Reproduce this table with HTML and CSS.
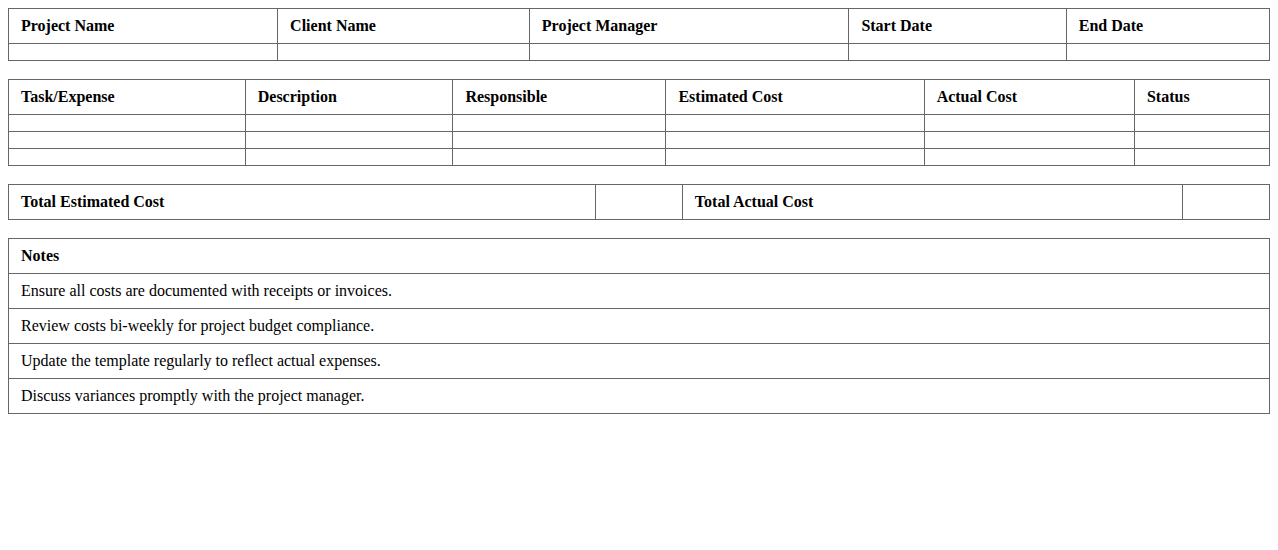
FILE: index.html
```html
<!DOCTYPE html>
<html lang="en">
<head>
<meta charset="utf-8">
<title>Project Cost Template</title>
<link rel="stylesheet" href="styles.css">
</head>
<body>
<table class="sheet">
  <tr><th>Project Name</th><th>Client Name</th><th>Project Manager</th><th>Start Date</th><th>End Date</th></tr>
  <tr><td></td><td></td><td></td><td></td><td></td></tr>
</table>
<table class="sheet">
  <tr><th>Task/Expense</th><th>Description</th><th>Responsible</th><th>Estimated Cost</th><th>Actual Cost</th><th>Status</th></tr>
  <tr><td></td><td></td><td></td><td></td><td></td><td></td></tr>
  <tr><td></td><td></td><td></td><td></td><td></td><td></td></tr>
  <tr><td></td><td></td><td></td><td></td><td></td><td></td></tr>
</table>
<table class="sheet">
  <tr><th>Total Estimated Cost</th><td></td><th>Total Actual Cost</th><td></td></tr>
</table>
<table class="sheet">
  <tr><th>Notes</th></tr>
  <tr><td>Ensure all costs are documented with receipts or invoices.</td></tr>
  <tr><td>Review costs bi-weekly for project budget compliance.</td></tr>
  <tr><td>Update the template regularly to reflect actual expenses.</td></tr>
  <tr><td>Discuss variances promptly with the project manager.</td></tr>
</table>
</body>
</html>
```
FILE: styles.css
```css
body {
  margin: 8px;
  font-family: "Liberation Serif", "Times New Roman", serif;
  font-size: 16px;
  color: #000;
  background: #fff;
}
.sheet {
  width: 100%;
  border-collapse: collapse;
  margin-bottom: 18px;
}
.sheet th,
.sheet td {
  border: 1px solid #666;
  padding: 8px 12px;
  text-align: left;
  font-size: 16px;
}
.sheet th {
  font-weight: bold;
}
```
